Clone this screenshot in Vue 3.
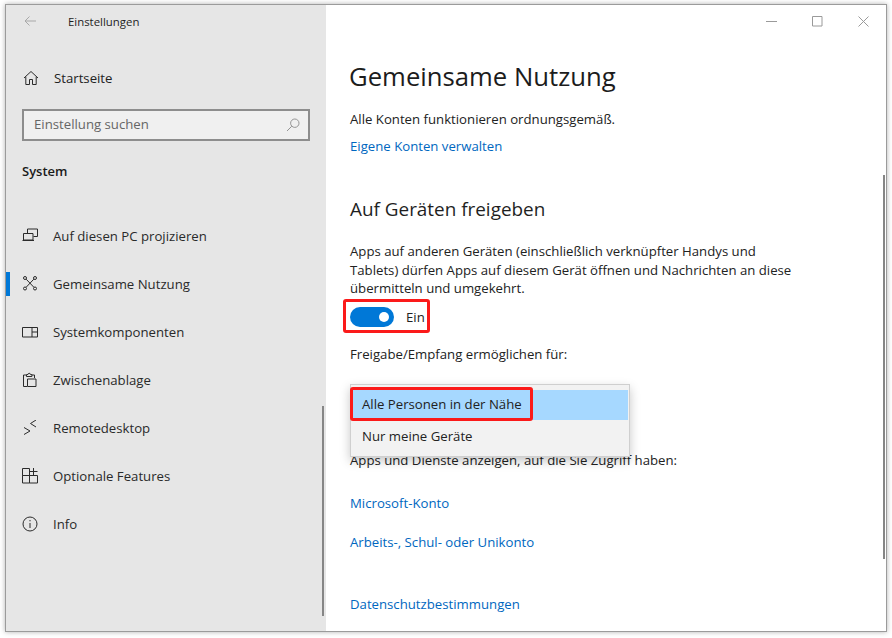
<script setup>
const navItems = [
  { label: 'Auf diesen PC projizieren', icon: 'project' },
  { label: 'Gemeinsame Nutzung', icon: 'share', active: true },
  { label: 'Systemkomponenten', icon: 'components' },
  { label: 'Zwischenablage', icon: 'clipboard' },
  { label: 'Remotedesktop', icon: 'remote' },
  { label: 'Optionale Features', icon: 'features' },
  { label: 'Info', icon: 'info' }
]
</script>

<template>
  <div class="page">
    <div class="window">
      <aside class="sidebar">
        <div class="titlebar">
          <svg class="back" width="12" height="10" viewBox="0 0 12 10" fill="none" stroke="#a8a8a8" stroke-width="1">
            <path d="M12 5H1M5.500.500 1 5l4.500 4.500" />
          </svg>
          <span class="app-title">Einstellungen</span>
        </div>
        <div class="home">
          <svg class="nav-icon" width="16" height="16" viewBox="0 0 16 16" fill="none" stroke="#2b2b2b" stroke-width="1">
            <path d="M1 8 8 1.500 15 8M2.800 6.800v7.700h3.700V9.500h3v5h3.700V6.800" />
          </svg>
          <span>Startseite</span>
        </div>
        <div class="search">
          <span class="placeholder">Einstellung suchen</span>
          <svg width="14" height="14" viewBox="0 0 14 14" fill="none" stroke="#949494" stroke-width="1">
            <circle cx="8.800" cy="5.200" r="4.200" />
            <path d="M5.800 8.200 1 13" />
          </svg>
        </div>
        <div class="section">System</div>
        <nav class="nav">
          <div v-for="item in navItems" :key="item.label" :class="['nav-row', { active: item.active }]">
            <svg class="nav-icon" width="16" height="16" viewBox="0 0 16 16" fill="none" stroke="#2b2b2b" stroke-width="1">
              <template v-if="item.icon === 'project'">
                <path d="M5.500 5V1H15.500v7.500H11.500" />
                <path d="M1.500 5.500h9.500v6.500H1.500zM.5 12.500h11.500" />
              </template>
              <template v-else-if="item.icon === 'share'">
                <circle cx="3" cy="2" r="1.500" />
                <circle cx="13" cy="2" r="1.500" />
                <circle cx="3" cy="12.500" r="1.500" />
                <circle cx="13" cy="12.500" r="1.500" />
                <path d="m4.200 3.200 7.600 8M11.800 3.200l-7.600 8" />
              </template>
              <template v-else-if="item.icon === 'components'">
                <path d="M.5 3.500h15v9.500H.5zM10 3.500V13M10 8h5.500" />
              </template>
              <template v-else-if="item.icon === 'clipboard'">
                <path d="M5 14.500H1.500V3H4M10 3h2.500v3" />
                <path d="M4.500 4.500V2.500H6a1.200 1.200 0 0 1 2.400 0h1.500v2z" />
                <path d="M5.500 7h8.500v7.500H5.500z" />
              </template>
              <template v-else-if="item.icon === 'remote'">
                <path d="m2 7.500 6 3.500-6 3.500M14 0 8.500 3.500 14 7" />
              </template>
              <template v-else-if="item.icon === 'features'">
                <path d="M.5.500h7v7h-7zM.5 7.500h7V15h-7zM7.500 7.500h8V15h-8zM11.500 0v7M8 3.500h7.500" />
              </template>
              <template v-else>
                <circle cx="8" cy="8" r="7" />
                <path d="M8 7v5M8 4v1.300" />
              </template>
            </svg>
            <span>{{ item.label }}</span>
          </div>
        </nav>
        <div class="scroll scroll-side"></div>
      </aside>

      <main class="content">
        <div class="controls">
          <svg width="11" height="11" viewBox="0 0 11 11" fill="none" stroke="#9a9a9a" stroke-width="1"><path d="M0 5.500h11" /></svg>
          <svg width="11" height="11" viewBox="0 0 11 11" fill="none" stroke="#9a9a9a" stroke-width="1"><path d="M.5.500h9.500v9.500H.5z" /></svg>
          <svg width="11" height="11" viewBox="0 0 11 11" fill="none" stroke="#9a9a9a" stroke-width="1"><path d="m.5.500 10 10M10.500.500l-10 10" /></svg>
        </div>
        <h1>Gemeinsame Nutzung</h1>
        <p class="status">Alle Konten funktionieren ordnungsgemäß.</p>
        <a class="link first-link">Eigene Konten verwalten</a>
        <h2>Auf Geräten freigeben</h2>
        <p class="desc">
          Apps auf anderen Geräten (einschließlich verknüpfter Handys und<br />
          Tablets) dürfen Apps auf diesem Gerät öffnen und Nachrichten an diese<br />
          übermitteln und umgekehrt.
        </p>
        <div class="toggle-row">
          <span class="toggle"><i class="knob"></i></span>
          <span>Ein</span>
          <div class="mark mark-toggle"></div>
        </div>
        <p class="share-label">Freigabe/Empfang ermöglichen für:</p>
        <p class="apps-label">Apps und Dienste anzeigen, auf die Sie Zugriff haben:</p>
        <a class="link ms-link">Microsoft-Konto</a>
        <a class="link work-link">Arbeits-, Schul- oder Unikonto</a>
        <a class="link privacy-link">Datenschutzbestimmungen</a>

        <div class="menu">
          <div class="option selected">Alle Personen in der Nähe</div>
          <div class="option">Nur meine Geräte</div>
          <div class="mark mark-option"></div>
        </div>
        <div class="scroll scroll-main"></div>
      </main>
    </div>
  </div>
</template>

<style scoped>
.page {
  width: 892px;
  height: 638px;
  box-sizing: border-box;
  padding: 4px 5px 5px 5px;
  background: #fff;
  font-family: "Open Sans", "Noto Sans", sans-serif;
  font-size: 13.2px;
  color: #222;
  overflow: hidden;
}

.window {
  display: flex;
  width: 882px;
  height: 628px;
  box-sizing: border-box;
  border: 1px solid #9b9b9b;
  box-shadow: 0 0 5px rgba(0, 0, 0, 0.3);
  background: #fff;
}

.sidebar {
  position: relative;
  width: 320px;
  flex: none;
  background: #e6e6e6;
}

.titlebar {
  display: flex;
  align-items: center;
  height: 32px;
  padding-left: 18px;
}

.app-title {
  margin-left: 32px;
  font-size: 11.400px;
  color: #1f1f1f;
}

.home {
  display: flex;
  align-items: center;
  height: 48px;
  margin-top: 17px;
  padding-left: 17px;
  color: #222;
}

.nav-icon {
  flex: none;
  margin-right: 15px;
}

.search {
  display: flex;
  align-items: center;
  justify-content: space-between;
  box-sizing: border-box;
  width: 288px;
  height: 32px;
  margin: 7px 0 0 16px;
  padding: 0 8px 0 10px;
  border: 2px solid #8d8d8d;
  background: #f0f0f0;
  color: #666;
}

.placeholder {
  padding-bottom: 2px;
}

.section {
  margin: 20px 0 0 16px;
  font-size: 13px;
  font-weight: 600;
  line-height: 20px;
  color: #1a1a1a;
}

.nav {
  margin-top: 31px;
}

.nav-row {
  position: relative;
  display: flex;
  align-items: center;
  height: 48px;
  padding-left: 16px;
  color: #2a2a2a;
}

.nav-row.active::before {
  content: "";
  position: absolute;
  top: 12px;
  left: 0;
  width: 4px;
  height: 24px;
  background: #0078d7;
}

.content {
  position: relative;
  flex: 1;
  padding-left: 24px;
}

.controls {
  position: absolute;
  top: 11px;
  right: 17px;
  display: flex;
  gap: 35px;
}

h1 {
  margin: 54px 0 0 -1px;
  font-size: 25.700px;
  font-weight: 400;
  line-height: 36px;
  color: #1c1c1c;
}

.status {
  margin: 15px 0 0;
  line-height: 18px;
}

.link {
  display: block;
  color: #0067c0;
  line-height: 18px;
}

.first-link {
  margin-top: 9px;
}

h2 {
  margin: 41px 0 0;
  font-size: 18.900px;
  font-weight: 400;
  line-height: 26px;
  color: #1f1f1f;
}

.desc {
  margin: 20px 0 0;
  line-height: 18.500px;
}

.toggle-row {
  position: relative;
  display: flex;
  align-items: center;
  gap: 12px;
  height: 22px;
  margin-top: 8px;
}

.toggle {
  position: relative;
  width: 44px;
  height: 20px;
  border-radius: 10px;
  background: #0078d7;
}

.knob {
  position: absolute;
  top: 5px;
  right: 5px;
  width: 10px;
  height: 10px;
  border-radius: 50%;
  background: #fff;
}

.mark {
  position: absolute;
  box-sizing: border-box;
  border: 3px solid #fb1a1a;
  border-radius: 3px;
}

.mark-toggle {
  top: -7px;
  left: -7px;
  width: 87px;
  height: 34px;
}

.share-label {
  margin: 17px 0 0;
  line-height: 18px;
}

.apps-label {
  margin: 88px 0 0;
  line-height: 18px;
}

.ms-link {
  margin-top: 25px;
}

.work-link {
  margin-top: 21px;
}

.privacy-link {
  margin-top: 44px;
}

.menu {
  position: absolute;
  top: 379px;
  left: 24px;
  box-sizing: border-box;
  width: 280px;
  height: 73px;
  padding: 5px 1px 0 1px;
  border: 1px solid #cfcfcf;
  background: #f2f2f2;
  box-shadow: 0 4px 10px rgba(0, 0, 0, 0.22);
}

.option {
  height: 32px;
  padding-left: 10px;
  line-height: 32px;
  color: #222;
}

.option.selected {
  height: 30px;
  line-height: 28px;
  background: #a6d8ff;
}

.mark-option {
  top: 2px;
  left: -1px;
  width: 183px;
  height: 34px;
}

.scroll {
  position: absolute;
  width: 2px;
  background: #868686;
}

.scroll-side {
  top: 401px;
  right: 2px;
  height: 210px;
}

.scroll-main {
  top: 170px;
  right: 1px;
  height: 384px;
}
</style>

<style>
html, body {
  margin: 0;
  background: #fff;
}
</style>
